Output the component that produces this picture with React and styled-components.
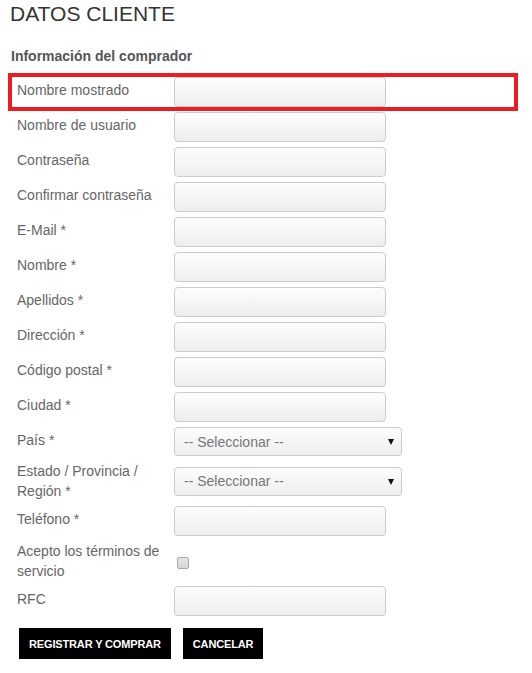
import React from 'react'
import styled, { createGlobalStyle } from 'styled-components'

const GlobalStyle = createGlobalStyle`
  body {
    margin: 0;
    background: #fff;
    font-family: "Liberation Sans", Arial, sans-serif;
  }
`

const fields = [
  { label: 'Nombre mostrado', highlight: true },
  { label: 'Nombre de usuario' },
  { label: 'Contraseña', type: 'password' },
  { label: 'Confirmar contraseña', type: 'password' },
  { label: 'E-Mail *' },
  { label: 'Nombre *' },
  { label: 'Apellidos *' },
  { label: 'Dirección *' },
  { label: 'Código postal *' },
  { label: 'Ciudad *' },
  { label: 'País *', kind: 'select' },
  { label: 'Estado / Provincia / Región *', kind: 'select', tall: true },
  { label: 'Teléfono *' },
  { label: 'Acepto los términos de servicio', kind: 'check', tall: true },
  { label: 'RFC' },
]

function App() {
  return (
    <Page>
      <GlobalStyle />
      <Title>DATOS CLIENTE</Title>
      <Subtitle>Información del comprador</Subtitle>

      <Form onSubmit={(e) => e.preventDefault()}>
        {fields.map((f) => (
          <Row key={f.label} $highlight={f.highlight}>
            <Label $tall={f.tall}>{f.label}</Label>
            {f.kind === 'select' && (
              <SelectWrap>
                <Select defaultValue="">
                  <option value="">-- Seleccionar --</option>
                </Select>
                <Arrow />
              </SelectWrap>
            )}
            {f.kind === 'check' && <Check type="checkbox" />}
            {!f.kind && <Input type={f.type || 'text'} />}
          </Row>
        ))}

        <Actions>
          <Button type="submit">Registrar y comprar</Button>
          <Button type="button">Cancelar</Button>
        </Actions>
      </Form>
    </Page>
  )
}

const Page = styled.div`
  width: 532px;
  box-sizing: border-box;
  padding: 2px 18px 0 12px;
`

const Title = styled.h1`
  margin: 0 0 0 -2px;
  font-size: 21px;
  line-height: 24px;
  font-weight: normal;
  color: #333;
  text-transform: uppercase;
`

const Subtitle = styled.h2`
  margin: 20px 0 0 -1px;
  font-size: 14px;
  line-height: 20px;
  font-weight: bold;
  color: #555;
`

const Form = styled.form`
  margin-top: 11px;
  display: flex;
  flex-direction: column;
  gap: 5px;
`

const Row = styled.div`
  display: grid;
  grid-template-columns: 157px auto;
  align-items: center;
  justify-items: start;
  padding-left: 5px;
  outline: ${(p) => (p.$highlight ? '4px solid #ed1c24' : 'none')};
`

const Label = styled.label`
  font-size: 14px;
  line-height: 20px;
  color: #666;
  padding-right: 6px;
  padding-bottom: ${(p) => (p.$tall ? 0 : 4)}px;
`

const fieldBox = `
  box-sizing: border-box;
  height: 30px;
  border: 1px solid #ccc;
  border-radius: 4px;
  background: linear-gradient(to bottom, #fdfdfd, #eeeeee);
  font-family: "Liberation Sans", Arial, sans-serif;
  font-size: 14px;
  color: #777;
  outline: none;
`

const Input = styled.input`
  ${fieldBox}
  width: 212px;
  padding: 0 10px;
`

const SelectWrap = styled.div`
  position: relative;
  width: 228px;
`

const Select = styled.select`
  ${fieldBox}
  display: block;
  width: 100%;
  height: 29px;
  padding: 0 24px 0 9px;
  appearance: none;
  -webkit-appearance: none;
`

const Arrow = styled.span`
  position: absolute;
  right: 8px;
  top: 12px;
  width: 0;
  height: 0;
  border-left: 3.5px solid transparent;
  border-right: 3.5px solid transparent;
  border-top: 6px solid #111;
  pointer-events: none;
`

const Check = styled.input`
  appearance: none;
  -webkit-appearance: none;
  box-sizing: border-box;
  width: 12px;
  height: 12px;
  margin: 4px 0 0 3px;
  border: 1px solid #a9a9a9;
  border-radius: 2px;
  background: linear-gradient(to bottom, #e4e4e4, #d6d6d6);
`

const Actions = styled.div`
  display: flex;
  gap: 12px;
  margin: 7px 0 0 7px;
`

const Button = styled.button`
  height: 31px;
  padding: 0 10px;
  border: none;
  background: #000;
  color: #fff;
  font-family: "Liberation Sans", Arial, sans-serif;
  font-size: 11px;
  font-weight: bold;
  letter-spacing: -0.15px;
  text-transform: uppercase;
  cursor: pointer;
`

export default App
